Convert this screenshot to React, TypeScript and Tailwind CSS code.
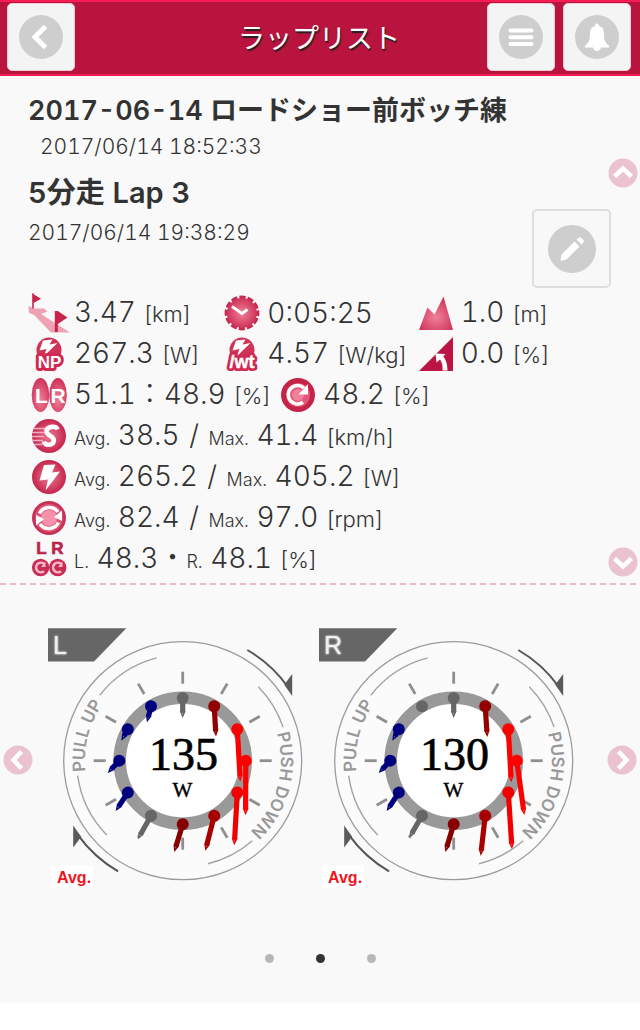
import React from "react";

type PinData = { from: [number, number]; to?: [number, number]; color: string };

const GRAY = "#666666";
const NAVY = "#00007f";

const leftPins: PinData[] = [
  { from: [147.7, 83], to: [147.7, 103], color: GRAY },
  { from: [179.2, 91.2], to: [181, 121.5], color: "#930000" },
  { from: [202.3, 114.3], to: [205.3, 166.5], color: "#ff0000" },
  { from: [210.8, 145.7], to: [210.6, 200.3], color: "#ff0000" },
  { from: [202.3, 177.5], to: [199.3, 230.3], color: "#f00000" },
  { from: [179.2, 200.8], to: [170.3, 235.7], color: "#a80000" },
  { from: [147.7, 209.3], to: [139.3, 237], color: "#860000" },
  { from: [116, 200.8], to: [102.7, 224.3], color: GRAY },
  { from: [92.8, 177.5], to: [80.7, 196], color: NAVY },
  { from: [84.3, 145.7], to: [72.7, 158], color: NAVY },
  { from: [92.8, 114.3], to: [86.3, 125.7], color: NAVY },
  { from: [116, 91.2], to: [112, 107.3], color: NAVY },
];

const rightPins: PinData[] = [
  { from: [147.7, 83], to: [147.7, 103], color: GRAY },
  { from: [179.2, 91.2], to: [181.3, 122], color: "#930000" },
  { from: [202.3, 114.3], to: [205.3, 167.3], color: "#ff0000" },
  { from: [210.8, 145.7], to: [218.3, 200], color: "#ff0000" },
  { from: [202.3, 177.5], to: [206, 234], color: "#f00000" },
  { from: [179.2, 200.8], to: [174.7, 240.7], color: "#a80000" },
  { from: [147.7, 209.3], to: [139.3, 237], color: "#860000" },
  { from: [116, 200.8], to: [103.3, 222.7], color: GRAY },
  { from: [92.8, 177.5], to: [80.7, 196], color: NAVY },
  { from: [84.3, 145.7], to: [72.7, 158], color: NAVY },
  { from: [92.8, 114.3], to: [86.3, 125.7], color: NAVY },
  { from: [116, 91.2], color: GRAY },
];

function Pin({ from, to, color }: PinData) {
  if (!to) return <circle cx={from[0]} cy={from[1]} r={6} fill={color} />;
  const dx = to[0] - from[0];
  const dy = to[1] - from[1];
  const len = Math.hypot(dx, dy);
  const angle = (Math.atan2(dy, dx) * 180) / Math.PI;
  return (
    <g transform={`translate(${from[0]} ${from[1]}) rotate(${angle})`}>
      <circle r={6} fill={color} />
      <path
        d={`M0 -2.6H${len - 7}V-3L${len} 0L${len - 7} 3V2.6H0Z`}
        fill={color}
      />
      <circle cx={len - 4.5} r={0.6} fill="#fff" fillOpacity={0.5} />
    </g>
  );
}

const tickAngles = [0, 30, 60, 90, 120, 150, 180, 210, 240, 270, 300, 330];

function Dial({ side, watts, pins }: { side: "L" | "R"; watts: number; pins: PinData[] }) {
  return (
    <svg
      viewBox="11 11 271 264"
      className="block min-w-0 flex-1 overflow-visible"
      role="img"
      aria-label={`${side} ${watts} W`}
    >
      <defs>
        <path id={`pull-${side}`} d="M60.8 190.7A98 98 0 0 1 103 58.5" />
        <path id={`push-${side}`} d="M241.7 117.5A98 98 0 0 1 170 241" />
        <filter id={`glow-${side}`} x="-50%" y="-50%" width="200%" height="200%">
          <feGaussianBlur stdDeviation="1.2" />
        </filter>
      </defs>
      <g transform="translate(147.7 145.7)">
        <circle r={119} fill="#fbfbfb" stroke="#9b9b9b" strokeWidth={1.3} />
        <circle r={63} fill="#ffffff" stroke="#999999" strokeWidth={12.6} />
        {tickAngles.map((a) => (
          <line key={a} y1={-77} y2={-89} stroke="#8f8f8f" strokeWidth={2.8} transform={`rotate(${a})`} />
        ))}
        <g fill="none" stroke="#a3a3a3" strokeWidth={1.4}>
          <path d="M-82.9 -65.5A106 106 0 0 1 -26 -102.8" />
          <path d="M75.6 -74A106 106 0 0 1 100.4 -33.6" />
          <path d="M-105 15A106 106 0 0 0 -76 74.4" />
          <path d="M69.6 80A106 106 0 0 1 25.3 103" />
        </g>
        <path d="M64.6 -110.7A128.4 128.4 0 0 1 105 -74" fill="none" stroke="#555" strokeWidth={2} />
        <path d="M109.5 -86.7V-64.7L101.5 -76Z" fill="#5a5a5a" />
        <path d="M-64.6 110.7A128.4 128.4 0 0 1 -105 74" fill="none" stroke="#555" strokeWidth={2} />
        <path d="M-109.5 86.7V64.7L-101.5 76Z" fill="#5a5a5a" />
      </g>
      <g fill="#999999" fontFamily="Inter, sans-serif" fontSize={17} fontWeight={600}>
        <text>
          <textPath href={`#pull-${side}`} startOffset="36">PULL UP</textPath>
        </text>
        <text>
          <textPath href={`#push-${side}`} startOffset="1">PUSH DOWN</textPath>
        </text>
      </g>
      <path d="M13 13.2H91.3L59 46.6H13Z" fill="#666666" />
      <g fontFamily="'Liberation Sans', sans-serif" fontSize={25} fill="#f1f1f1">
        <text x={18} y={39} fill="#fff" filter={`url(#glow-${side})`} aria-hidden="true">{side}</text>
        <text x={18} y={39}>{side}</text>
      </g>
      {pins.map((p, i) => (
        <Pin key={i} {...p} />
      ))}
      <text x={148.5} y={154.5} fontFamily="'Liberation Serif', serif" textAnchor="middle" fill="#000" stroke="#000" fontSize={46} strokeWidth={0.7}>
        {watts}
        <tspan x={147.5} y={181.5} fontSize={21} strokeWidth={0.4}>W</tspan>
      </text>
      <rect x={16} y={250.5} width={42} height={22} fill="#ffffff" />
      <text x={22} y={268} fontFamily="'Liberation Sans', sans-serif" fontWeight={700} fontSize={16} fill="#f0141e">
        Avg.
      </text>
    </svg>
  );
}

function Icon({ children }: { children: React.ReactNode }) {
  return (
    <svg viewBox="0 0 34 34" className="size-[34px] shrink-0 overflow-visible" aria-hidden="true">
      {children}
    </svg>
  );
}

const boldLabel = { fontFamily: "'Liberation Sans', sans-serif", fontWeight: 700 };

const DistanceIcon = () => (
  <Icon>
    <path d="M-3.5 10L2 12.5L12 12.5L15.5 15.5L9 18L38 36.5H19L2 19L-3 17Z" fill="#eea3b5" />
    <path d="M.2 -2.7H1.8V12.5H.2ZM1.6 -1.8L9 2.7L1.6 7Z" fill="#c9234b" />
    <path d="M22.8 15H25.8V36H22.8ZM25.8 15L35.5 21.5L25.8 28Z" fill="#c9234b" />
  </Icon>
);
const ClockIcon = () => (
  <Icon>
    <circle cx="17" cy="17" r="15.7" fill="none" stroke="#c92a50" strokeWidth="3.4" strokeDasharray="6.2 2.02" strokeDashoffset="3.1" />
    <circle cx="17" cy="17" r="15" fill="url(#rose-clock)" />
    <path d="M7 10.5L17 17.5L22.5 13.5" fill="none" stroke="#fff" strokeWidth="2.8" />
  </Icon>
);
const AscentIcon = () => (
  <Icon>
    <path d="M0 34L8.5 11.5L15.5 18.5L24.5 .5L34 34Z" fill="url(#rose)" />
  </Icon>
);
const bolt = "M11 3.5L20.5 2.5L17.5 7.5L25.5 6L12 19L14.5 12L7.5 13.5Z";
const NpIcon = () => (
  <Icon>
    <circle cx="17" cy="13" r="12.5" fill="#cf3358" />
    <path d={bolt} fill="#fff" />
    <g {...boldLabel} fontSize="17" textAnchor="middle">
      <text x="17.5" y="31" fill="#d8365c" stroke="#d02a52" strokeWidth="6" strokeLinejoin="round" aria-hidden="true">NP</text>
      <text x="17.5" y="31" fill="#fff">NP</text>
    </g>
  </Icon>
);
const WtIcon = () => (
  <Icon>
    <circle cx="17" cy="13" r="12.5" fill="#cf3358" />
    <path d={bolt} fill="#fff" />
    <g {...boldLabel} fontSize="18" textAnchor="middle">
      <text x="17" y="31" fill="#d8365c" stroke="#d02a52" strokeWidth="6" strokeLinejoin="round" aria-hidden="true">/wt</text>
      <text x="17" y="31" fill="#fff" stroke="#fff" strokeWidth="0.4">/wt</text>
    </g>
  </Icon>
);
const GradeIcon = () => (
  <Icon>
    <path d="M0 34L34 0V34Z" fill="#bd1543" />
    <path d="M16.5 16.5L26.5 17L24.3 19.3Q28.500 25 28.500 33.500H23.500Q24 27 21 22.500L17.500 25.500Z" fill="#fff" />
  </Icon>
);
const BalanceIcon = () => (
  <Icon>
    <ellipse cx="8.5" cy="17" rx="8.8" ry="17" fill="url(#rose)" />
    <ellipse cx="26" cy="17" rx="8.8" ry="17" fill="url(#rose)" />
    <g {...boldLabel} fontSize="21" fill="#fff" textAnchor="middle">
      <text x="9.5" y="24.5">L</text>
      <text x="26" y="24.5">R</text>
    </g>
  </Icon>
);
const CircularIcon = () => (
  <Icon>
    <circle cx="17" cy="17" r="17" fill="#c52449" />
    <circle cx="17" cy="17" r="12" fill="#e2577a" />
    <circle cx="17" cy="17" r="6" fill="#f0819c" />
    <path d="M22 24.3A9.3 9.3 0 1 1 23 10" fill="none" stroke="#fff" strokeWidth="3.6" />
    <path d="M27 6V16.5H17.5Z" fill="#fff" />
  </Icon>
);
const SpeedIcon = () => (
  <Icon>
    <circle cx="17" cy="17" r="17" fill="url(#rose-deep)" />
    <path d="M1.5 9.5H14M0 13.5H12M0 17.5H12M0 21.5H11M2 25.5H10" stroke="#f3aec0" strokeWidth="1.3" />
    <path d="M25.5 10.5C24 6.5 15 7 14.5 12C14 17 22.5 16.5 21.8 21.8C21 27 13 27 11.8 22.5" fill="none" stroke="#fff" strokeWidth="4.6" />
  </Icon>
);
const PowerIcon = () => (
  <Icon>
    <circle cx="17" cy="17" r="17" fill="url(#rose-deep)" />
    <path d="M12 5L23.5 4.5L20 12.5L28 11.5L13.5 30.5L16 19.5L7.5 20.5Z" fill="#fff" />
  </Icon>
);
const CadenceIcon = () => (
  <Icon>
    <circle cx="17" cy="17" r="17" fill="#c93055" />
    <circle cx="17" cy="17" r="14" fill="#de5677" />
    <circle cx="17" cy="17" r="8" fill="#f591aa" />
    <path d="M7.5 12.5A10.8 10.8 0 0 1 26 11" fill="none" stroke="#fff" strokeWidth="3.5" />
    <path d="M30 9.5V20L22 16Z" fill="#fff" />
    <path d="M26.5 21.5A10.8 10.8 0 0 1 8 23" fill="none" stroke="#fff" strokeWidth="3.5" />
    <path d="M4 24.5V14L12 18Z" fill="#fff" />
  </Icon>
);
const EachCircularIcon = () => (
  <Icon>
    <g {...boldLabel} fontSize="17" fill="#bd2249" stroke="#bd2249" strokeWidth="0.6" textAnchor="middle">
      <text x="9.5" y="12">L</text>
      <text x="25.5" y="12">R</text>
    </g>
    <circle cx="8.6" cy="25.5" r="8.7" fill="#c82d54" />
    <circle cx="25.7" cy="25.5" r="8.7" fill="#c82d54" />
    <g fill="none">
      <path d="M12 29.2A4.8 4.8 0 1 1 12 21.8" stroke="#f7b9c8" strokeWidth="2.6" />
      <path d="M29 29.2A4.8 4.8 0 1 1 29 21.8" stroke="#f7b9c8" strokeWidth="2.6" />
    </g>
    <path d="M13.5 19.5V25H9Z M30.5 19.5V25H26Z" fill="#f7b9c8" />
  </Icon>
);

const Unit = ({ children }: { children: string }) => <span className="text-[22px]">[{children}]</span>;
const Small = ({ children }: { children: string }) => <span className="text-lg">{children}</span>;

function Metric({ icon, children }: { icon: React.ReactNode; children: React.ReactNode }) {
  return (
    <div className="flex h-[41px] items-center gap-2 whitespace-nowrap">
      {icon}
      <span className="pt-0.5">{children}</span>
    </div>
  );
}

function AvgMax({ icon, avg, max, unit }: { icon: React.ReactNode; avg: string; max: string; unit: string }) {
  return (
    <Metric icon={icon}>
      <Small>Avg.</Small> {avg} <span className="mx-0.5">/</span> <Small>Max.</Small> {max} <Unit>{unit}</Unit>
    </Metric>
  );
}

function Chevron({ label, rotate, place }: { label: string; rotate: number; place: string }) {
  return (
    <button type="button" aria-label={label} className={`absolute ${place}`}>
      <svg viewBox="0 0 30 30" className="size-[30px]" aria-hidden="true">
        <circle cx="15" cy="15" r="14.5" fill="#ebc3d0" />
        <path d="M6.5 18.5L15 10.5L23.5 18.5" fill="none" stroke="#fff" strokeWidth="4.5" transform={`rotate(${rotate} 15 15)`} />
      </svg>
    </button>
  );
}

function HeaderButton({ label, children }: { label: string; children: React.ReactNode }) {
  return (
    <button
      type="button"
      aria-label={label}
      className="flex size-[68px] items-center justify-center rounded-[5px] border border-[#f3c9d3] bg-[#f4f4f4]"
    >
      <svg viewBox="0 0 44 44" className="size-11" aria-hidden="true">
        <circle cx="22" cy="22" r="22" fill="#cecece" />
        {children}
      </svg>
    </button>
  );
}

export default function App() {
  return (
    <div className="bg-white text-[#333] tabular-nums [font-family:Inter,'Noto_Sans_CJK_JP',sans-serif]">
      <svg className="absolute size-0" aria-hidden="true">
        <defs>
          <radialGradient id="rose" cx="50%" cy="62%" r="60%">
            <stop offset="0" stopColor="#f0809a" />
            <stop offset="1" stopColor="#cf3359" />
          </radialGradient>
          <radialGradient id="rose-clock" cx="50%" cy="50%" r="50%">
            <stop offset="0" stopColor="#f0809a" />
            <stop offset="1" stopColor="#cf3359" />
          </radialGradient>
          <radialGradient id="rose-deep" cx="50%" cy="50%" r="50%">
            <stop offset="0" stopColor="#ec7b96" />
            <stop offset="0.85" stopColor="#cb3157" />
            <stop offset="1" stopColor="#c3284e" />
          </radialGradient>
        </defs>
      </svg>

      <header className="grid h-[76px] grid-cols-[144px_1fr_144px] items-start border-y-2 border-[#f81c55] bg-[#b8143d] pt-px pr-[9px] pl-[7px]">
        <HeaderButton label="戻る">
          <path d="M26.5 11.5L16 22L26.5 32.5" fill="none" stroke="#fff" strokeWidth="5" />
        </HeaderButton>
        <div className="pt-4 text-center text-[27px] leading-10 text-white [text-shadow:1px_2px_1px_#222]">
          ラップリスト
        </div>
        <div className="flex justify-end gap-2">
          <HeaderButton label="メニュー">
            <path d="M11.5 15.5H32.5M11.5 22.3H32.5M11.5 29H32.5" fill="none" stroke="#fff" strokeWidth="4" strokeLinecap="round" />
          </HeaderButton>
          <HeaderButton label="お知らせ">
            <path d="M22 8.5C23.5 8.5 24 9.5 24 11C28 12 29 15 29 19C29 25 30.5 28.5 34 30.5V32.5H26C25.5 35 24 36 22 36C20 36 18.5 35 18 32.5H10V30.5C13.5 28.5 15 25 15 19C15 15 16 12 20 11C20 9.5 20.5 8.5 22 8.5Z" fill="#fff" />
          </HeaderButton>
        </div>
      </header>

      <main className="bg-[#f9f9f9]">
        <section className="relative pt-[15px] pb-1">
          <div className="pr-[29px] pl-7">
            <h1 className="text-[27px] leading-10 font-semibold">2017-06-14 ロードショー前ボッチ練</h1>
            <p className="pl-3 text-[21px] leading-8 font-light">2017/06/14 18:52:33</p>
            <div className="mt-2.5 flex items-start justify-between">
              <div>
                <h2 className="text-[29px] leading-10 font-semibold">5分走 Lap 3</h2>
                <p className="mt-1 text-[21px] leading-8 font-light">2017/06/14 19:38:29</p>
              </div>
              <button
                type="button"
                aria-label="編集"
                className="mt-9 flex size-[79px] items-center justify-center rounded-[5px] border-2 border-[#dedede] bg-[#f8f8f8]"
              >
                <svg viewBox="0 0 48 48" className="size-12" aria-hidden="true">
                  <circle cx="24" cy="24" r="24" fill="#cecece" />
                  <path d="M12.5 36L13.5 29.5L26.5 16.5L31.5 21.5L18.5 34.5ZM28.5 14.5L30.5 12.8Q32 11.8 33.5 13L35.2 14.8Q36.5 16.5 35.2 17.8L33.5 19.5Z" fill="#fff" />
                </svg>
              </button>
            </div>
          </div>

          <div className="mt-1 pr-7 pl-8 text-[28px] leading-[41px] font-light">
            <div className="grid grid-cols-3">
              <Metric icon={<DistanceIcon />}>3.47 <Unit>km</Unit></Metric>
              <Metric icon={<ClockIcon />}>0:05:25</Metric>
              <Metric icon={<AscentIcon />}>1.0 <Unit>m</Unit></Metric>
              <Metric icon={<NpIcon />}>267.3 <Unit>W</Unit></Metric>
              <Metric icon={<WtIcon />}>4.57 <Unit>W/kg</Unit></Metric>
              <Metric icon={<GradeIcon />}>0.0 <Unit>%</Unit></Metric>
            </div>
            <div className="flex gap-2.5">
              <Metric icon={<BalanceIcon />}>51.1：48.9 <Unit>%</Unit></Metric>
              <Metric icon={<CircularIcon />}>48.2 <Unit>%</Unit></Metric>
            </div>
            <AvgMax icon={<SpeedIcon />} avg="38.5" max="41.4" unit="km/h" />
            <AvgMax icon={<PowerIcon />} avg="265.2" max="405.2" unit="W" />
            <AvgMax icon={<CadenceIcon />} avg="82.4" max="97.0" unit="rpm" />
            <Metric icon={<EachCircularIcon />}>
              <Small>L.</Small> 48.3・<Small>R.</Small> 48.1 <Unit>%</Unit>
            </Metric>
          </div>
          <Chevron label="前のラップ" rotate={0} place="top-[82px] right-0.5" />
          <Chevron label="次のラップ" rotate={180} place="bottom-1.5 right-0.5" />
        </section>

        <div className="h-0.5 bg-[repeating-linear-gradient(90deg,#e9bcc8_0_6px,transparent_6px_10px)]" />

        <section className="relative pt-[41px] pb-10">
          <div className="flex pr-[52px] pl-[46px]">
            <Dial side="L" watts={135} pins={leftPins} />
            <Dial side="R" watts={130} pins={rightPins} />
          </div>
          <Chevron label="前へ" rotate={-90} place="top-40 left-[3px]" />
          <Chevron label="次へ" rotate={90} place="top-40 right-[3px]" />
          <div className="mt-16 flex justify-center gap-[42px]">
            <button type="button" aria-label="1ページ" className="size-[9px] rounded-full bg-[#b8b8b8]" />
            <button type="button" aria-label="2ページ" aria-current="true" className="size-[9px] rounded-full bg-[#333]" />
            <button type="button" aria-label="3ページ" className="size-[9px] rounded-full bg-[#b8b8b8]" />
          </div>
        </section>
      </main>
    </div>
  );
}
